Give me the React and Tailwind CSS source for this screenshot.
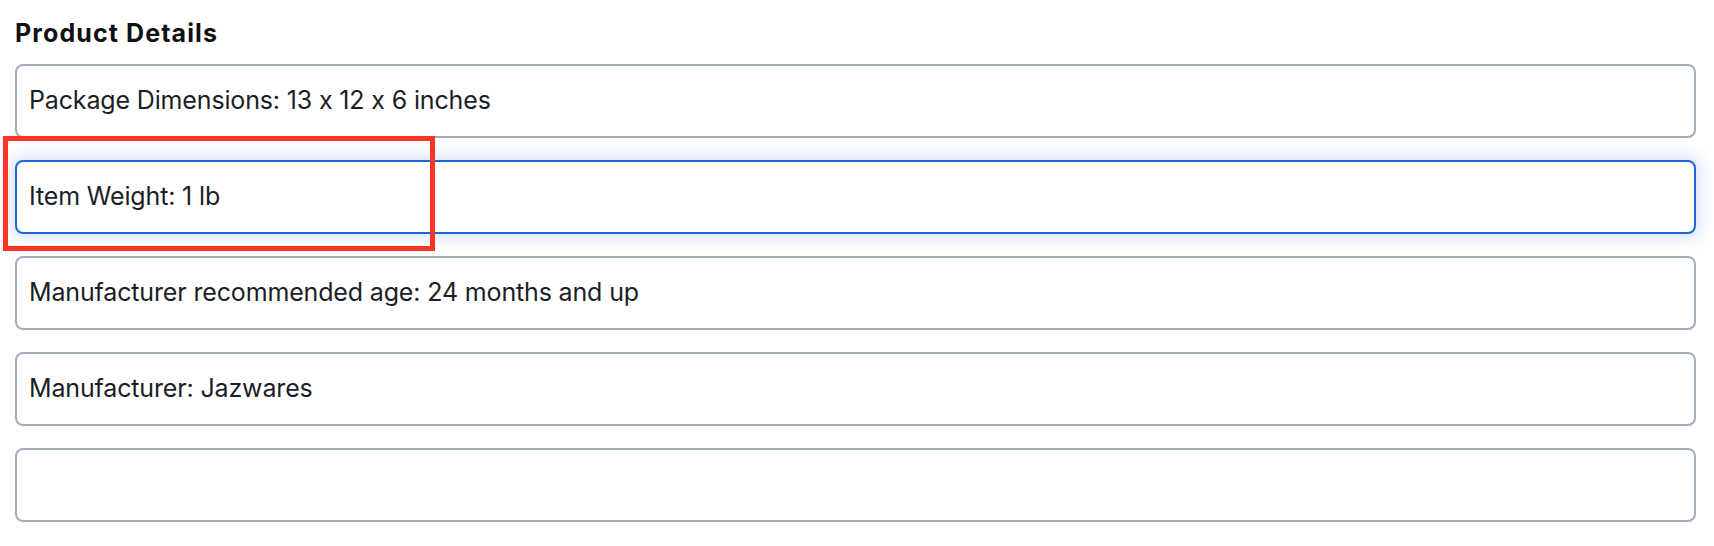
// App.jsx — product details form with a highlighted field

const DETAILS = [
  'Package Dimensions: 13 x 12 x 6 inches',
  'Item Weight: 1 lb',
  'Manufacturer recommended age: 24 months and up',
  'Manufacturer: Jazwares',
  '',
];

const FOCUSED_INDEX = 1;

const DetailField = ({ value, isFocused }) => (
  <div
    className={`flex h-[74px] items-center rounded-[8px] border-2 bg-white px-[12px] text-[25px] tracking-[-0.15px] text-[#1b1e26] ${
      isFocused
        ? 'border-[#1d66d8] shadow-[0_0_14px_5px_rgba(29,102,216,0.16)]'
        : 'border-[#a3adbd]'
    }`}
  >
    {value}
  </div>
);

const App = () => (
  // calt off: Inter otherwise turns "13 x 12" into a multiplication sign
  <div className="relative min-h-[546px] bg-white pl-[15px] pr-[18px] pt-[17px] font-['Inter',sans-serif] [font-feature-settings:'calt'_0]">
    <h2 className="text-[25px] font-bold leading-[32px] tracking-[1.1px] text-[#111]">Product Details</h2>

    <div className="mt-[15px] flex flex-col gap-[22px]">
      {DETAILS.map((value, index) => (
        <DetailField key={index} value={value} isFocused={index === FOCUSED_INDEX} />
      ))}
    </div>

    {/* annotation box drawn over the focused field */}
    <div className="pointer-events-none absolute left-[3px] top-[136px] h-[115px] w-[432px] border-[5px] border-[#ff3426]" />
  </div>
);

export default App;
